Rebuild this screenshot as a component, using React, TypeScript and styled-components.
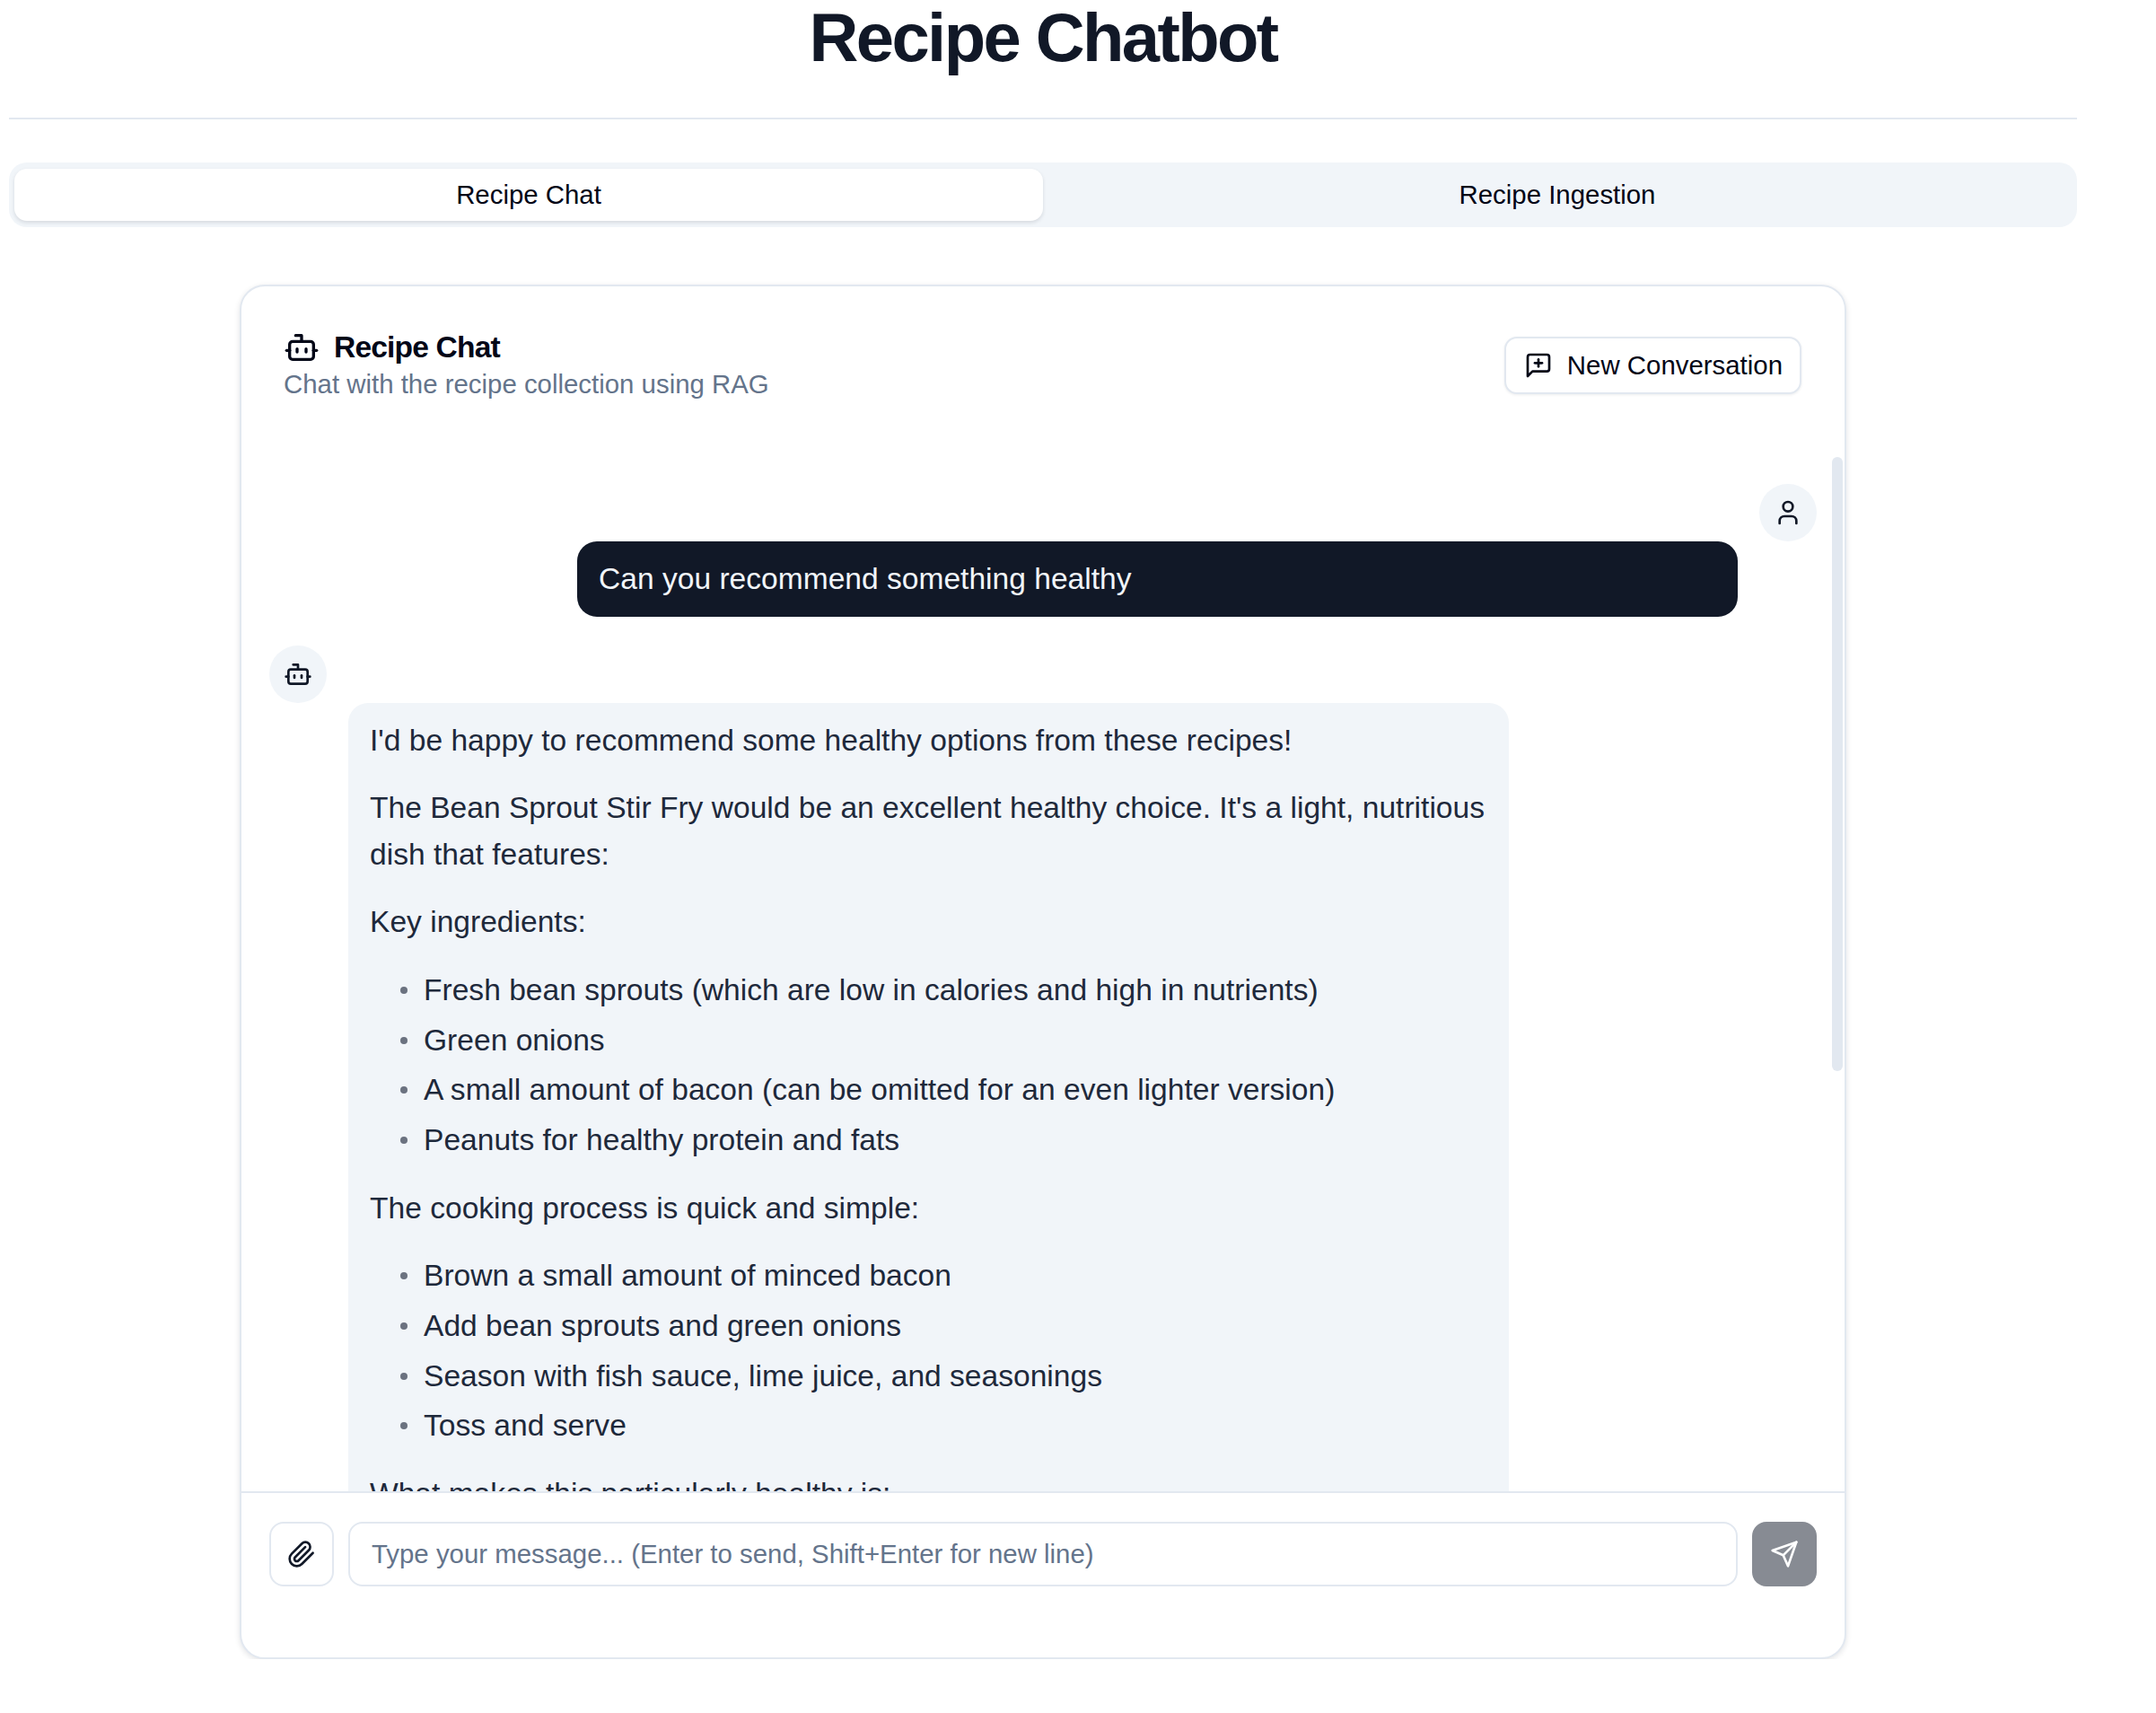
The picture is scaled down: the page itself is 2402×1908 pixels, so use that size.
import styled, { createGlobalStyle } from "styled-components";
import { Bot, User } from "lucide-react";

const recipeParts = [
  { kind: "p", text: "I'd be happy to recommend some healthy options from these recipes!" },
  {
    kind: "p",
    text: "The Bean Sprout Stir Fry would be an excellent healthy choice. It's a light, nutritious dish that features:",
  },
  { kind: "p", text: "Key ingredients:" },
  {
    kind: "ul",
    items: [
      "Fresh bean sprouts (which are low in calories and high in nutrients)",
      "Green onions",
      "A small amount of bacon (can be omitted for an even lighter version)",
      "Peanuts for healthy protein and fats",
    ],
  },
  { kind: "p", text: "The cooking process is quick and simple:" },
  {
    kind: "ul",
    items: [
      "Brown a small amount of minced bacon",
      "Add bean sprouts and green onions",
      "Season with fish sauce, lime juice, and seasonings",
      "Toss and serve",
    ],
  },
  { kind: "p", text: "What makes this particularly healthy is:" },
];

const GlobalStyle = createGlobalStyle`
  html, body {
    margin: 0;
    padding: 0;
    background: #ffffff;
  }
  body {
    font-family: "Liberation Sans", Arial, sans-serif;
    color: #111827;
  }
  * {
    box-sizing: border-box;
  }
`;

const Page = styled.div`
  width: 2304px;
  margin-left: 10px;
`;

const Header = styled.header`
  height: 133px;
  border-bottom: 2px solid #e2e8f0;
  text-align: center;
`;

const Title = styled.h1`
  margin: 0;
  font-size: 76px;
  line-height: 84px;
  font-weight: 700;
  letter-spacing: -2.6px;
  color: #111827;
`;

const TabList = styled.div`
  display: grid;
  grid-template-columns: 1fr 1fr;
  height: 72px;
  margin-top: 48px;
  padding: 7px 6px;
  border-radius: 20px;
  background: #f1f5f9;
`;

const Tab = styled.div<{ $active?: boolean }>`
  display: flex;
  align-items: center;
  justify-content: center;
  border-radius: 14px;
  font-size: 29.4px;
  color: #020617;
  background: ${(p) => (p.$active ? "#ffffff" : "transparent")};
  box-shadow: ${(p) => (p.$active ? "0 2px 4px rgba(15, 23, 42, 0.12)" : "none")};
`;

const Card = styled.section`
  position: relative;
  width: 1790px;
  height: 1531px;
  margin: 64px auto 0;
  display: flex;
  flex-direction: column;
  border: 2px solid #e2e8f0;
  border-radius: 28px;
  background: #ffffff;
  box-shadow: 0 2px 6px rgba(15, 23, 42, 0.12);
`;

const CardHeader = styled.div`
  height: 190px;
  flex: none;
  display: flex;
  justify-content: space-between;
  padding: 48px 48px 0 47px;
`;

const CardHeading = styled.h2`
  display: flex;
  align-items: center;
  gap: 16px;
  margin: 0;
  font-size: 33.6px;
  line-height: 40px;
  font-weight: 700;
  letter-spacing: -0.84px;
  color: #020617;
`;

const CardSubtitle = styled.p`
  margin: 3px 0 0;
  font-size: 29.4px;
  line-height: 36px;
  color: #64748b;
`;

const OutlineButton = styled.button`
  display: flex;
  align-items: center;
  gap: 16px;
  height: 64px;
  margin-top: 8px;
  padding: 0 19px 0 20px;
  border: 2px solid #e2e8f0;
  border-radius: 14px;
  background: #ffffff;
  font-family: inherit;
  font-size: 29.4px;
  color: #020617;
  box-shadow: 0 1px 3px rgba(15, 23, 42, 0.08);
`;

const Messages = styled.div`
  position: relative;
  flex: 1;
  min-height: 0;
  overflow: hidden;
  display: flex;
  flex-direction: column;
  gap: 32px;
  padding: 30px 31px 0 31px;
`;

const ScrollThumb = styled.div`
  position: absolute;
  top: 0;
  right: 2px;
  width: 12px;
  height: 684px;
  border-radius: 6px;
  background: #e2e8f0;
`;

const MessageRow = styled.div<{ $mine?: boolean }>`
  display: flex;
  flex: none;
  flex-direction: ${(p) => (p.$mine ? "row-reverse" : "row")};
  gap: 24px;
`;

const Avatar = styled.div`
  flex: none;
  width: 64px;
  height: 64px;
  display: flex;
  align-items: center;
  justify-content: center;
  border-radius: 50%;
  background: #f1f5f9;
  color: #111827;
`;

const Bubble = styled.div<{ $mine?: boolean }>`
  width: 1293px;
  margin-top: 64px;
  padding: 16px 24px;
  border-radius: ${(p) => (p.$mine ? "22px" : "22px 22px 0 0")};
  font-size: 33.6px;
  line-height: 51.8px;
  background: ${(p) => (p.$mine ? "#111827" : "#f1f5f9")};
  color: ${(p) => (p.$mine ? "#f1f5f9" : "#1e293b")};
`;

const Para = styled.p`
  margin: 0 0 23.6px;
`;

const Bullets = styled.ul`
  margin: 0 0 23.6px;
  padding: 0 0 0 34px;
  list-style: none;
`;

const BulletItem = styled.li`
  display: flex;
  gap: 18px;
  margin-bottom: 4px;

  &::before {
    content: "";
    flex: none;
    width: 8px;
    height: 8px;
    margin-top: 22px;
    border-radius: 50%;
    background: #6b7280;
  }
`;

const Composer = styled.div`
  flex: none;
  display: flex;
  gap: 16px;
  padding: 32px 31px 79px 31px;
  border-top: 2px solid #e2e8f0;
`;

const AttachButton = styled.button`
  flex: none;
  width: 72px;
  height: 72px;
  display: flex;
  align-items: center;
  justify-content: center;
  border: 2px solid #e2e8f0;
  border-radius: 16px;
  background: #ffffff;
  color: #111827;
  padding: 0;
`;

const MessageInput = styled.input`
  flex: 1;
  min-width: 0;
  height: 72px;
  padding: 0 24px;
  border: 2px solid #e2e8f0;
  border-radius: 16px;
  font-family: inherit;
  font-size: 29.4px;
  outline: none;

  &::placeholder {
    color: #64748b;
    opacity: 1;
  }
`;

const SendButton = styled.button`
  flex: none;
  width: 72px;
  height: 72px;
  display: flex;
  align-items: center;
  justify-content: center;
  border: 0;
  border-radius: 16px;
  padding: 0;
  background: #878b93;
  color: #ffffff;
`;

const IconSvg = styled.svg`
  flex: none;
  width: 32px;
  height: 32px;
  fill: none;
  stroke: currentColor;
  stroke-width: 2;
  stroke-linecap: round;
  stroke-linejoin: round;
`;

function NewChatIcon() {
  return (
    <IconSvg viewBox="0 0 24 24">
      <path d="M21 15a2 2 0 0 1-2 2H7l-4 4V5a2 2 0 0 1 2-2h14a2 2 0 0 1 2 2z" />
      <path d="M12 7v6" />
      <path d="M9 10h6" />
    </IconSvg>
  );
}

function ClipIcon() {
  return (
    <IconSvg viewBox="0 0 24 24">
      <path d="m21.44 11.05-9.19 9.19a6 6 0 0 1-8.49-8.49l8.57-8.57A4 4 0 1 1 18 8.84l-8.59 8.57a2 2 0 0 1-2.83-2.83l8.49-8.48" />
    </IconSvg>
  );
}

function PlaneIcon() {
  return (
    <IconSvg viewBox="0 0 24 24">
      <path d="m22 2-7 20-4-9-9-4Z" />
      <path d="M22 2 11 13" />
    </IconSvg>
  );
}

export default function App() {
  return (
    <Page>
      <GlobalStyle />
      <Header>
        <Title>Recipe Chatbot</Title>
      </Header>
      <TabList>
        <Tab $active>Recipe Chat</Tab>
        <Tab>Recipe Ingestion</Tab>
      </TabList>
      <Card>
        <CardHeader>
          <div>
            <CardHeading>
              <Bot size={40} strokeWidth={2} />
              Recipe Chat
            </CardHeading>
            <CardSubtitle>Chat with the recipe collection using RAG</CardSubtitle>
          </div>
          <OutlineButton>
            <NewChatIcon />
            New Conversation
          </OutlineButton>
        </CardHeader>
        <Messages>
          <ScrollThumb />
          <MessageRow $mine>
            <Avatar>
              <User size={32} strokeWidth={2} />
            </Avatar>
            <Bubble $mine>Can you recommend something healthy</Bubble>
          </MessageRow>
          <MessageRow>
            <Avatar>
              <Bot size={32} strokeWidth={2} />
            </Avatar>
            <Bubble>
              {recipeParts.map((part, index) =>
                part.kind === "p" ? (
                  <Para key={index}>{part.text}</Para>
                ) : (
                  <Bullets key={index}>
                    {part.items?.map((item) => (
                      <BulletItem key={item}>{item}</BulletItem>
                    ))}
                  </Bullets>
                ),
              )}
            </Bubble>
          </MessageRow>
        </Messages>
        <Composer>
          <AttachButton aria-label="Attach">
            <ClipIcon />
          </AttachButton>
          <MessageInput placeholder="Type your message... (Enter to send, Shift+Enter for new line)" />
          <SendButton aria-label="Send">
            <PlaneIcon />
          </SendButton>
        </Composer>
      </Card>
    </Page>
  );
}
